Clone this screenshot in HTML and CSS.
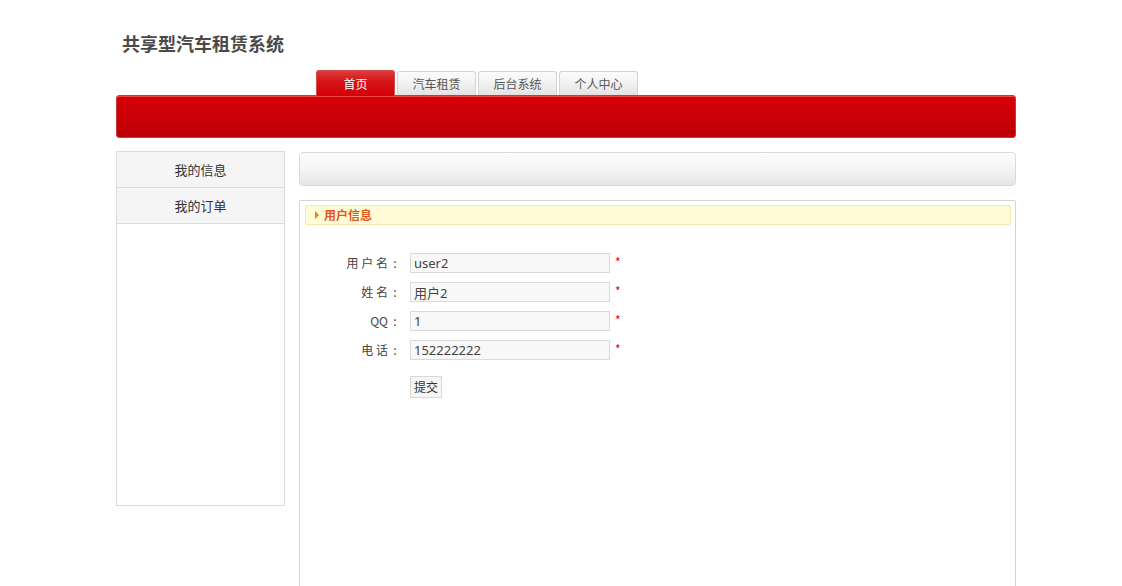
FILE: index.html
```html
<!DOCTYPE html>
<html lang="zh">
<head>
<meta charset="utf-8">
<title>共享型汽车租赁系统</title>
<link rel="stylesheet" href="styles.css">
</head>
<body>
<div class="wrap">
  <header class="header">
    <h1 class="logo">共享型汽车租赁系统</h1>
    <nav class="tabs">
      <a class="tab active">首页</a>
      <a class="tab">汽车租赁</a>
      <a class="tab">后台系统</a>
      <a class="tab">个人中心</a>
    </nav>
    <div class="redbar"></div>
  </header>
  <div class="body">
    <aside class="side">
      <a class="side-item">我的信息</a>
      <a class="side-item">我的订单</a>
    </aside>
    <main class="main">
      <div class="topbar"></div>
      <section class="panel">
        <div class="panel-head"><span class="arrow"></span>用户信息</div>
        <form class="form">
          <label class="lbl">用 户 名<span class="colon">:</span></label>
          <input class="inp" type="text" value="user2">
          <span class="req">*</span>
          <label class="lbl">姓 名<span class="colon">:</span></label>
          <input class="inp" type="text" value="用户2">
          <span class="req">*</span>
          <label class="lbl">QQ<span class="colon">:</span></label>
          <input class="inp" type="text" value="1">
          <span class="req">*</span>
          <label class="lbl">电 话<span class="colon">:</span></label>
          <input class="inp" type="text" value="152222222">
          <span class="req">*</span>
          <span></span>
          <div class="btn-row"><button type="button" class="btn">提交</button></div>
          <span></span>
        </form>
      </section>
    </main>
  </div>
</div>
</body>
</html>
```

FILE: styles.css
```css
html, body {
  margin: 0;
  padding: 0;
  background: #fff;
}
body {
  font-family: "Noto Sans CJK SC", "Noto Sans", sans-serif;
  font-size: 12px;
  color: #333;
}
.wrap {
  width: 900px;
  margin-left: 116px;
}
.logo {
  margin: 0;
  height: 70px;
  padding: 31px 0 0 6px;
  box-sizing: border-box;
  font-size: 18px;
  line-height: 24px;
  font-weight: bold;
  color: #4a4a4a;
}
.tabs {
  display: flex;
  gap: 2px;
  padding-left: 200px;
  height: 25px;
  align-items: flex-end;
  position: relative;
  z-index: 1;
}
.tab {
  width: 77px;
  height: 23px;
  line-height: 24px;
  text-align: center;
  color: #555;
  font-size: 12px;
  border: 1px solid #d3d3d3;
  border-bottom: none;
  border-radius: 3px 3px 0 0;
  background: linear-gradient(#fbfbfb 0%, #f2f2f2 50%, #e2e2e2 100%);
}
.tab.active {
  height: 25px;
  line-height: 26px;
  color: #fff;
  border-color: #d94a4a;
  background: linear-gradient(#df3b3b 0%, #d41616 40%, #d20008 100%);
  margin-bottom: -1px;
}
.redbar {
  height: 41px;
  border: 1px solid #c83a3a;
  border-radius: 3px;
  background: linear-gradient(#d80008 0%, #cc0008 50%, #ba0006 100%);
  box-shadow: inset 0 1px 0 #e44;
}
.body {
  display: flex;
  gap: 14px;
  margin-top: 13px;
  align-items: flex-start;
}
.side {
  width: 167px;
  height: 353px;
  border: 1px solid #dcdcdc;
  display: flex;
  flex-direction: column;
}
.side-item {
  height: 35px;
  line-height: 35px;
  border-bottom: 1px solid #dcdcdc;
  background: #f5f5f5;
  text-align: center;
  font-size: 13px;
  color: #333;
}
.main {
  flex: 1;
  display: flex;
  flex-direction: column;
  gap: 14px;
  margin-top: 1px;
}
.topbar {
  height: 32px;
  border: 1px solid #dadada;
  border-radius: 4px;
  background: linear-gradient(#fdfdfd 0%, #f4f4f4 50%, #e6e6e6 100%);
}
.panel {
  height: 400px;
  border: 1px solid #d4d4d4;
  border-radius: 2px;
  padding: 4px 4px 0 5px;
}
.panel-head {
  height: 18px;
  line-height: 18px;
  border: 1px solid #f1e8b0;
  border-radius: 2px;
  background: #fffbd6;
  color: #e4561c;
  font-weight: bold;
  font-size: 12px;
  padding-left: 9px;
  display: flex;
  align-items: center;
  gap: 5px;
}
.arrow {
  width: 0;
  height: 0;
  border-top: 4px solid transparent;
  border-bottom: 4px solid transparent;
  border-left: 4px solid #f0800c;
}
.form {
  display: grid;
  grid-template-columns: 97px 200px 20px;
  column-gap: 8px;
  row-gap: 9px;
  margin-top: 28px;
  align-items: center;
}
.lbl {
  text-align: right;
  font-size: 12px;
  color: #444;
  line-height: 20px;
}
.colon {
  display: inline-block;
  width: 14px;
  text-align: center;
}
.inp {
  box-sizing: border-box;
  width: 200px;
  height: 20px;
  margin: 0;
  border: 1px solid #dadada;
  background: #f8f8f8;
  padding: 0 3px;
  font-family: "Noto Sans", "Noto Sans CJK SC", sans-serif;
  font-size: 13px;
  color: #444;
}
.req {
  color: #e00;
  font-size: 12px;
  align-self: start;
  margin-left: -3px;
}
.btn-row {
  padding-top: 7px;
}
.btn {
  box-sizing: border-box;
  height: 22px;
  padding: 0 3px;
  border: 1px solid #d8d8d8;
  background: #f6f6f6;
  font-family: "Noto Sans CJK SC", sans-serif;
  font-size: 12px;
  color: #333;
  line-height: 18px;
}
```
